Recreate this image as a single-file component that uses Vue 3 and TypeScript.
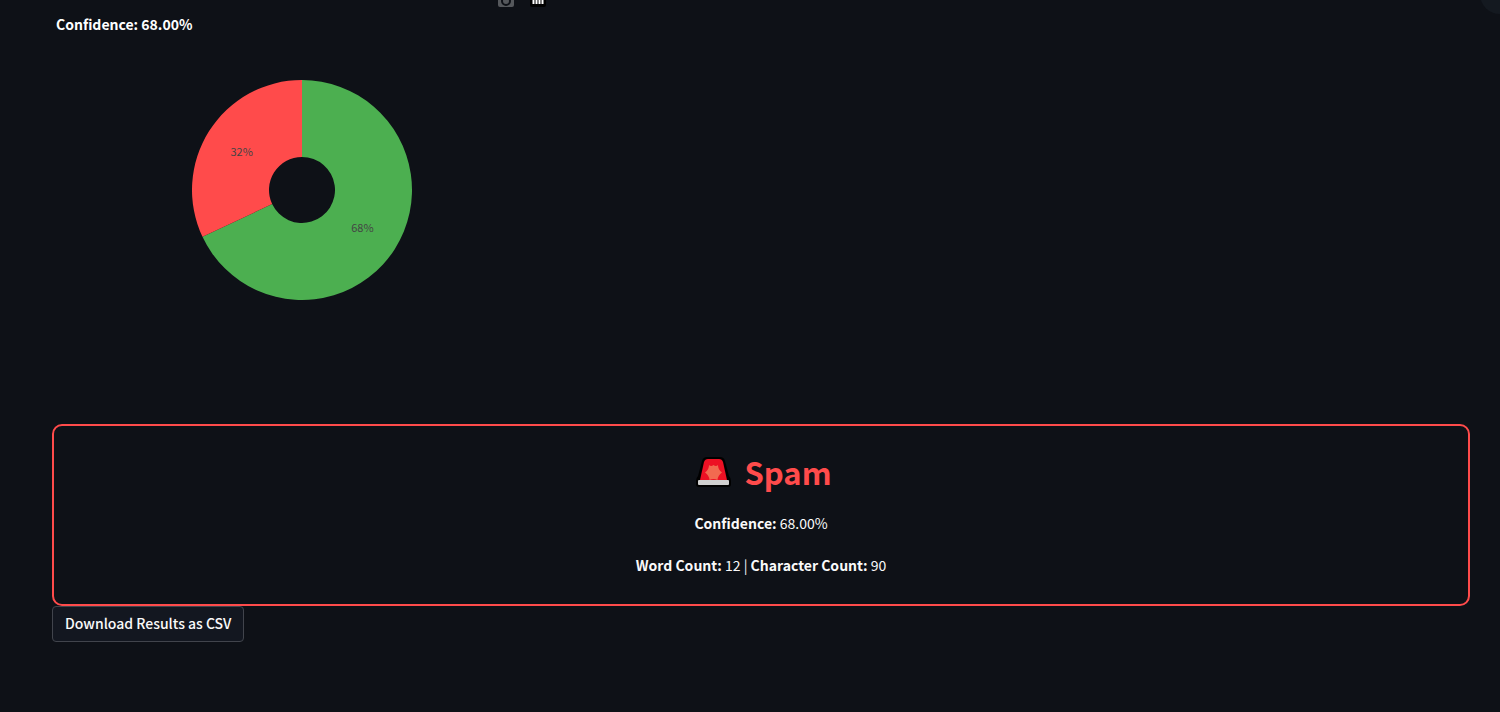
<script setup lang="ts">
interface Slice {
  label: string
  value: number
  color: string
}

const slices: Slice[] = [
  { label: '68%', value: 68, color: '#4caf50' },
  { label: '32%', value: 32, color: '#ff4b4b' },
]

const outer = 110
const inner = 33

const point = (radius: number, share: number) => {
  const angle = share * 2 * Math.PI
  return { x: radius * Math.sin(angle), y: -radius * Math.cos(angle) }
}

const total = slices.reduce((sum, s) => sum + s.value, 0)
let start = 0
const arcs = slices.map((slice) => {
  const from = start / total
  const to = (start + slice.value) / total
  start += slice.value
  const large = to - from > 0.5 ? 1 : 0
  const a = point(outer, from)
  const b = point(outer, to)
  const c = point(inner, to)
  const d = point(inner, from)
  const text = point((outer + inner) / 2, (from + to) / 2)
  return {
    ...slice,
    text,
    path: `M${a.x} ${a.y}A${outer} ${outer} 0 ${large} 1 ${b.x} ${b.y}L${c.x} ${c.y}A${inner} ${inner} 0 ${large} 0 ${d.x} ${d.y}Z`,
  }
})

const confidence = '68.00%'
const words = 12
const characters = 90
</script>

<template>
  <main class="page">
    <section class="chart">
      <div class="toolbar">
        <button type="button" class="tool" aria-label="Download plot as a png">
          <svg width="16" height="16" viewBox="0 0 16 16">
            <rect y="3" width="16" height="13" rx="2" fill="#55585c" />
            <circle cx="8" cy="10" r="4" fill="none" stroke="#0e1117" stroke-width="2" />
          </svg>
        </button>
        <button type="button" class="tool" aria-label="Produced with Plotly">
          <svg width="16" height="17" viewBox="0 0 16 17">
            <rect width="16" height="17" rx="2" fill="#000" />
            <path d="M3.5 8v6M6.5 8v6M9.5 8v6M12.5 8v6" stroke="#fff" stroke-width="2" />
          </svg>
        </button>
      </div>
      <h2 class="chart-title">Confidence: {{ confidence }}</h2>
      <svg class="pie" viewBox="-110 -110 220 220" role="img" aria-label="Confidence chart">
        <path v-for="arc in arcs" :key="arc.label" :d="arc.path" :fill="arc.color" />
        <text v-for="arc in arcs" :key="arc.label" :x="arc.text.x" :y="arc.text.y + 4">{{ arc.label }}</text>
      </svg>
    </section>

    <section class="card">
      <h1 class="verdict">
        <svg class="siren" width="42" height="34" viewBox="-6 0 42 34" aria-hidden="true">
          <path d="M11 2H24Q28 2 29 6L33 21Q35 23 35 26V29Q35 32 32 32H3Q0 32 0 29V26Q0 23 2 21L6 6Q7 2 11 2Z" fill="#000" />
          <path d="M12 4H23Q26 4 27 7L31 25H4L8 7Q9 4 12 4Z" fill="#ed1124" />
          <path d="M13 10Q15 12 17.500 10Q20 12 22 10Q22 15 26 17.500Q22 20 21.500 25Q17.500 23 13.500 25Q13 20 9 17.500Q13 15 13 10Z" fill="#f26a50" />
          <rect x="2" y="25" width="31" height="5" rx="1" fill="#d0d0d0" />
        </svg>
        <span>Spam</span>
      </h1>
      <p><strong>Confidence:</strong> {{ confidence }}</p>
      <p><strong>Word Count:</strong> {{ words }} | <strong>Character Count:</strong> {{ characters }}</p>
    </section>
    <button type="button" class="download">Download Results as CSV</button>

    <button type="button" class="corner" aria-label="Fullscreen"></button>
  </main>
</template>

<style>
body {
  background: #0e1117;
}
</style>

<style scoped>
.page {
  position: relative;
  box-sizing: border-box;
  min-height: 100vh;
  padding: 0 30px 40px 52px;
  overflow: hidden;
  background: #0e1117;
  color: #fafafa;
  font-family: "Noto Sans CJK SC", "Open Sans", sans-serif;
  font-size: 14px;
  line-height: 24px;
}

.chart {
  position: relative;
  box-sizing: border-box;
  max-width: 500px;
  height: 424px;
  padding-top: 12px;
}

.toolbar {
  position: absolute;
  top: -10px;
  right: 6px;
  display: flex;
  gap: 16px;
}

.tool {
  display: block;
  padding: 0;
  border: 0;
  background: none;
  line-height: 0;
}

.chart-title {
  margin: 0 4px;
  color: #fff;
  font-size: 14px;
  font-weight: 700;
}

.pie {
  display: block;
  width: 220px;
  height: 220px;
  margin: 44px auto 0;
}

.pie text {
  fill: #444;
  font-size: 11px;
  text-anchor: middle;
}

.card {
  padding: 20px;
  border: 2px solid #ff4b4b;
  border-radius: 10px;
  text-align: center;
}

.verdict {
  display: flex;
  justify-content: center;
  align-items: center;
  gap: 12px;
  margin: 0 0 13px;
  color: #ff4b4b;
  font-size: 31px;
  font-weight: 700;
  line-height: 52px;
}

.card p {
  margin: 0 0 18px;
}

.card p:last-child {
  margin: 0 0 7px;
}

.download {
  display: block;
  height: 36px;
  padding: 0 12px 2px;
  border: 1px solid #41444c;
  border-radius: 4px;
  background: #131720;
  color: #fafafa;
  font: inherit;
  font-weight: 500;
}

.corner {
  position: absolute;
  top: -26px;
  right: -20px;
  width: 40px;
  height: 40px;
  border: 0;
  border-radius: 50%;
  background: #141920;
}
</style>
